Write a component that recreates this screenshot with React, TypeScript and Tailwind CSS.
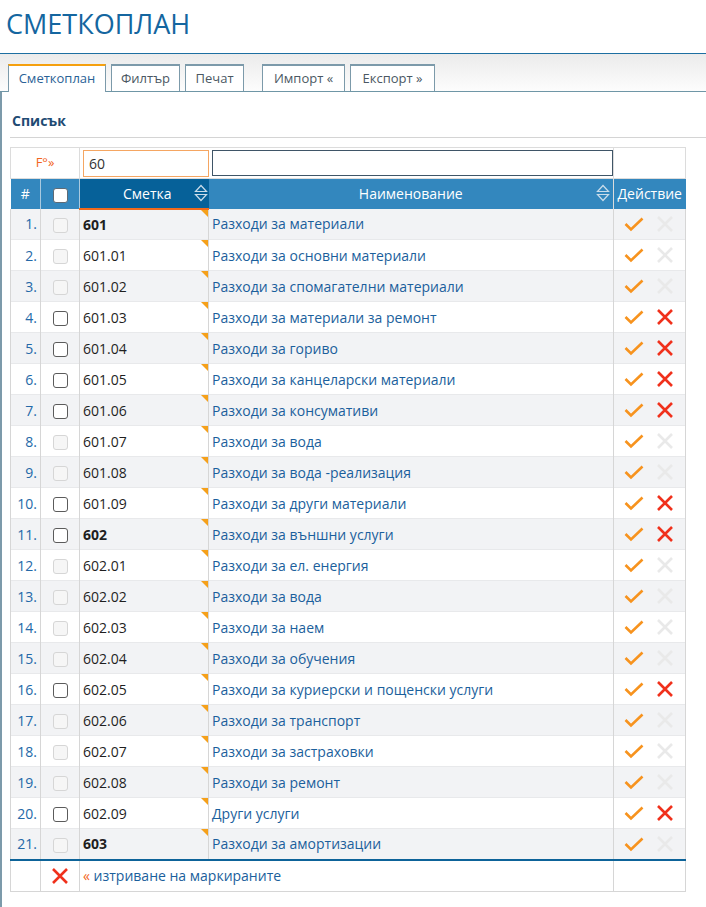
import React from 'react';

type Row = { code: string; name: string; bold?: boolean; active?: boolean };

const rows: Row[] = [
  { code: '601', name: 'Разходи за материали', bold: true },
  { code: '601.01', name: 'Разходи за основни материали' },
  { code: '601.02', name: 'Разходи за спомагателни материали' },
  { code: '601.03', name: 'Разходи за материали за ремонт', active: true },
  { code: '601.04', name: 'Разходи за гориво', active: true },
  { code: '601.05', name: 'Разходи за канцеларски материали', active: true },
  { code: '601.06', name: 'Разходи за консумативи', active: true },
  { code: '601.07', name: 'Разходи за вода' },
  { code: '601.08', name: 'Разходи за вода -реализация' },
  { code: '601.09', name: 'Разходи за други материали', active: true },
  { code: '602', name: 'Разходи за външни услуги', bold: true, active: true },
  { code: '602.01', name: 'Разходи за ел. енергия' },
  { code: '602.02', name: 'Разходи за вода' },
  { code: '602.03', name: 'Разходи за наем' },
  { code: '602.04', name: 'Разходи за обучения' },
  { code: '602.05', name: 'Разходи за куриерски и пощенски услуги', active: true },
  { code: '602.06', name: 'Разходи за транспорт' },
  { code: '602.07', name: 'Разходи за застраховки' },
  { code: '602.08', name: 'Разходи за ремонт' },
  { code: '602.09', name: 'Други услуги', active: true },
  { code: '603', name: 'Разходи за амортизации', bold: true },
];

const Check = () => (
  <svg width="20" height="16" viewBox="0 0 20 16">
    <polyline points="1.5,8 7,13.5 18.5,2.5" fill="none" stroke="#f7931e" strokeWidth="2.6" />
  </svg>
);

const Cross = ({ on }: { on?: boolean }) => (
  <svg width="18" height="18" viewBox="0 0 18 18">
    <path d="M2 2 L16 16 M16 2 L2 16" fill="none" stroke={on ? '#f0311c' : '#e9e9e9'} strokeWidth="2.6" />
  </svg>
);

const SortIcon = () => (
  <svg width="14" height="20" viewBox="0 0 14 20">
    <path d="M1.5 8.5 L7 2.5 L12.5 8.5 Z" fill="none" stroke="#c9dcea" strokeWidth="1.2" />
    <path d="M1.5 11.5 L7 17.5 L12.5 11.5 Z" fill="none" stroke="#c9dcea" strokeWidth="1.2" />
  </svg>
);

const Box = ({ active, header }: { active?: boolean; header?: boolean }) => (
  <span
    className={`inline-block w-[15px] h-[15px] rounded-[3px] border align-middle ${
      header
        ? 'bg-white border-[#5d6a75]'
        : active
          ? 'bg-white border-[#5b5b5b]'
          : 'bg-[#f6f6f6] border-[#d6d6d6]'
    }`}
  />
);

const tabs = [
  { label: 'Сметкоплан', active: true, w: 'w-[98px]' },
  { label: 'Филтър', w: 'w-[69px]' },
  { label: 'Печат', w: 'w-[59px]' },
];

export default function App() {
  return (
    <div className="min-h-[907px] bg-white font-['Open_Sans',sans-serif] text-[14px]">
      <div className="h-[54px] pl-[6px] pt-[5px] border-b border-[#1d6fa2]">
        <h1 className="text-[27px] leading-[38px] text-[#1466a0]">СМЕТКОПЛАН</h1>
      </div>
      <div className="h-[38px] bg-gradient-to-b from-[#ebebeb] to-[#fdfdfd] border-b border-[#6f96a6] flex items-end pl-[8px]">
        {tabs.map((t) => (
          <div
            key={t.label}
            className={`${t.w} h-[27px] mr-[5px] flex items-center justify-center text-[13px] border-x border-[#7c9aaa] ${
              t.active
                ? 'bg-white border-t-2 border-t-[#f5a00f] text-[#2a6296] -mb-px h-[28px]'
                : 'bg-white border-t-2 border-t-[#7c9aaa] text-[#4b5863]'
            }`}
          >
            {t.label}
          </div>
        ))}
        <div className="w-[13px]" />
        <div className="w-[83px] h-[27px] mr-[5px] flex items-center justify-center text-[13px] border-x border-t-2 border-[#7c9aaa] bg-white text-[#4b5863]">
          Импорт «
        </div>
        <div className="w-[85px] h-[27px] flex items-center justify-center text-[13px] border-x border-t-2 border-[#7c9aaa] bg-white text-[#4b5863]">
          Експорт »
        </div>
      </div>
      <div className="border-l-2 border-[#7c9aaa] min-h-[815px] pl-[8px] pt-[18px]">
        <div className="pl-[2px] pb-[6px] font-bold text-[14px] text-[#1f4b73] border-b border-[#d4d4d4]">Списък</div>
        <table className="mt-[9px] border-collapse table-fixed w-[675px]">
          <colgroup>
            <col className="w-[30px]" />
            <col className="w-[39px]" />
            <col className="w-[129px]" />
            <col className="w-[405px]" />
            <col className="w-[72px]" />
          </colgroup>
          <tbody>
            <tr className="h-[31px]">
              <td colSpan={2} className="border border-[#dcdcdc] text-center text-[#f26522] text-[13px]">
                F°»
              </td>
              <td className="border-y border-[#dcdcdc] pl-[3px] pr-0">
                <div className="h-[27px] border border-[#f5a662] flex items-center pl-[5px] text-[#333]">60</div>
              </td>
              <td className="border-y border-r border-[#dcdcdc] pl-[3px] pr-0">
                <div className="h-[26px] border border-[#3f5567]" />
              </td>
              <td className="border border-[#dcdcdc]" />
            </tr>
            <tr className="h-[30px] bg-[#3387be] text-white">
              <td className="text-center border-r border-[#a9c9df]">#</td>
              <td className="text-center border-r border-[#a9c9df]">
                <Box header />
              </td>
              <td className="bg-[#066199] border-b-2 border-[#f26a1b] relative">
                <div className="flex items-center justify-center pl-[6px]">Сметка</div>
                <span className="absolute right-[1px] top-[4px]">
                  <SortIcon />
                </span>
              </td>
              <td className="relative border-r border-[#dcdcdc]">
                <div className="text-center">Наименование</div>
                <span className="absolute right-[3px] top-[4px]">
                  <SortIcon />
                </span>
              </td>
              <td className="text-center">Действие</td>
            </tr>
            {rows.map((r, i) => (
              <tr key={r.code} className={`h-[31px] ${i % 2 === 0 ? 'bg-[#f2f3f5]' : 'bg-white'} border-b border-[#e8e9eb]`}>
                <td className="text-right pr-[3px] text-[#2469a8] border-l border-r border-[#d6d6d6]">{i + 1}.</td>
                <td className="text-center border-r border-[#d6d6d6]">
                  <Box active={r.active} />
                </td>
                <td className={`relative pl-[3px] text-[#1f1f1f] border-r border-[#d6d6d6] ${r.bold ? 'font-bold' : ''}`}>
                  {r.code}
                  <span className="absolute right-0 top-0 w-0 h-0 border-l-[7px] border-l-transparent border-t-[7px] border-t-[#f5a01a]" />
                </td>
                <td className="pl-[3px] text-[#1b5f9c] border-r border-[#d6d6d6] whitespace-nowrap overflow-hidden">{r.name}</td>
                <td className="border-r border-[#d6d6d6]">
                  <div className="flex items-center pl-[10px] gap-[12px]">
                    <Check />
                    <Cross on={r.active} />
                  </div>
                </td>
              </tr>
            ))}
            <tr className="h-[32px] border-t-2 border-[#0d6399]">
              <td className="border-l border-r border-b border-[#d6d6d6]" />
              <td className="text-center border-r border-b border-[#d6d6d6]">
                <div className="flex justify-center">
                  <Cross on />
                </div>
              </td>
              <td colSpan={2} className="pl-[3px] text-[#1b5f9c] border-r border-b border-[#d6d6d6]">
                <span className="text-[#f26522]">«</span> изтриване на маркираните
              </td>
              <td className="border-r border-b border-[#d6d6d6]" />
            </tr>
          </tbody>
        </table>
      </div>
    </div>
  );
}
